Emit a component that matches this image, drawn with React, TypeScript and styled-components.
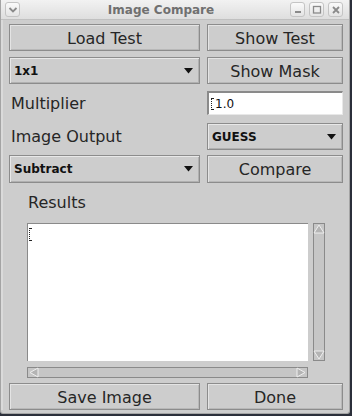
import React from 'react';
import styled, { createGlobalStyle } from 'styled-components'

const Global = createGlobalStyle`
  html, body { margin:0; padding:0; background:#2b2f3a; }
  body { font-family:"DejaVu Sans", "Liberation Sans", sans-serif; }
`

function TitleIcon({ kind }: { kind: 'menu' | 'min' | 'max' | 'close' }) {
    return (
        <svg width="10" height="10" viewBox="0 0 10 10">
            {kind === 'menu' && <path d="M1.5 3 L5 6.5 L8.5 3" stroke="#8a8a8a" strokeWidth="1.8" fill="none" />}
            {kind === 'min' && <rect x="2" y="6" width="6" height="2" fill="#8a8a8a" />}
            {kind === 'max' && <rect x="1.5" y="1.5" width="7" height="6.5" stroke="#8a8a8a" strokeWidth="1.3" fill="none" />}
            {kind === 'close' && <path d="M2 2 L8 8 M8 2 L2 8" stroke="#8a8a8a" strokeWidth="1.8" />}
        </svg>
    )
}

function Arrow() {
    return (
        <svg width="9" height="6" viewBox="0 0 9 6">
            <path d="M0 0 H9 L4.5 5.5 Z" fill="#111" />
        </svg>
    )
}

function ScrollArrow({ dir }: { dir: 'up' | 'down' | 'left' | 'right' }) {
    const d = {
        up: 'M1 9 L6 1 L11 9 Z',
        down: 'M1 1 L6 9 L11 1 Z',
        left: 'M10 1 L2 5.5 L10 10 Z',
        right: 'M2 1 L10 5.5 L2 10 Z',
    }[dir]
    const vertical = dir === 'up' || dir === 'down'
    return (
        <svg width="12" height={vertical ? 10 : 11} viewBox={vertical ? '0 0 12 10' : '0 0 12 11'}>
            <path d={d} fill="#b4b4b4" stroke="#efefef" strokeWidth="1" />
        </svg>
    )
}

function App() {
    return (
        <>
            <Global />
            <Window>
                <TitleBar>
                    <TitleButton><TitleIcon kind="menu" /></TitleButton>
                    <Title>Image Compare</Title>
                    <TitleButtons>
                        <TitleButton><TitleIcon kind="min" /></TitleButton>
                        <TitleButton><TitleIcon kind="max" /></TitleButton>
                        <TitleButton><TitleIcon kind="close" /></TitleButton>
                    </TitleButtons>
                </TitleBar>
                <Content>
                    <Row $top={4}>
                        <Button>Load Test</Button>
                        <Button>Show Test</Button>
                    </Row>
                    <Row $top={6}>
                        <Choice><span>1x1</span><Arrow /></Choice>
                        <Button>Show Mask</Button>
                    </Row>
                    <Row $top={7} $height={24}>
                        <Label>Multiplier</Label>
                        <Field><Caret />1.0</Field>
                    </Row>
                    <Row $top={8}>
                        <Label>Image Output</Label>
                        <Choice><span>GUESS</span><Arrow /></Choice>
                    </Row>
                    <Row $top={5} $height={28}>
                        <Choice><span>Subtract</span><Arrow /></Choice>
                        <Button>Compare</Button>
                    </Row>
                    <ResultsLabel>Results</ResultsLabel>
                    <ScrollPane>
                        <TextArea><Caret $tall /></TextArea>
                        <VScroll>
                            <ScrollArrow dir="up" />
                            <ScrollArrow dir="down" />
                        </VScroll>
                        <HScroll>
                            <ScrollArrow dir="left" />
                            <ScrollArrow dir="right" />
                        </HScroll>
                    </ScrollPane>
                    <Row $top={5}>
                        <Button>Save Image</Button>
                        <Button>Done</Button>
                    </Row>
                </Content>
            </Window>
        </>
    );
}

const Window = styled.div`
  width:350px;
  height:414px;
  box-sizing:border-box;
  background:#cdcdcd;
  border:1px solid #a4a4a4;
  border-top:none;
  border-radius:0 0 3px 3px;
  display:flex;
  flex-direction:column;`

const TitleBar = styled.div`
  height:20px;
  display:flex;
  align-items:center;
  padding:0 6px 0 4px;
  background:linear-gradient(#f2f2f2, #dedede);
  border-bottom:1px solid #c0c0c0;
  box-sizing:border-box;`

const Title = styled.div`
  flex:1;
  text-align:center;
  font-weight:bold;
  font-size:12px;
  color:#707070;
  padding-left:12px;`

const TitleButtons = styled.div`
  display:flex;
  gap:4px;`

const TitleButton = styled.div`
  width:15px;
  height:15px;
  box-sizing:border-box;
  border:1px solid #c4c4c4;
  border-radius:3px;
  background:linear-gradient(#fafafa, #e4e4e4);
  display:flex;
  align-items:center;
  justify-content:center;`

const Content = styled.div`
  padding:0 6px 0 6px;
  display:flex;
  flex-direction:column;
  border-left:2px solid #dadada;`

const Row = styled.div<{ $top: number, $height?: number }>`
  display:grid;
  grid-template-columns:191px 136px;
  column-gap:7px;
  margin-top:${p => p.$top}px;
  height:${p => p.$height ?? 27}px;`

const Button = styled.div`
  box-sizing:border-box;
  border:1px solid #8c8c8c;
  box-shadow:inset 1px 1px 0 #e4e4e4, inset -1px -1px 0 #b8b8b8;
  background:#cdcdcd;
  display:flex;
  align-items:center;
  justify-content:center;
  font-size:16px;
  color:#262626;
  padding-top:1px;`

const Choice = styled.div`
  box-sizing:border-box;
  border:1px solid #8c8c8c;
  box-shadow:inset 1px 1px 0 #e8e8e8, inset -1px -1px 0 #b0b0b0;
  background:#cdcdcd;
  display:flex;
  align-items:center;
  justify-content:space-between;
  padding:0 6px 0 4px;
  font-size:12px;
  font-weight:bold;
  color:#111;`

const Label = styled.div`
  display:flex;
  align-items:center;
  padding-left:2px;
  font-size:16px;
  color:#262626;`

const Field = styled.div`
  box-sizing:border-box;
  background:#fff;
  border-top:2px solid #8a8a8a;
  border-left:2px solid #8a8a8a;
  border-right:1px solid #e8e8e8;
  border-bottom:1px solid #e8e8e8;
  display:flex;
  align-items:center;
  padding-left:1px;
  font-size:12px;
  color:#111;`

const Caret = styled.span<{ $tall?: boolean }>`
  display:inline-block;
  width:3px;
  height:${p => p.$tall ? 13 : 12}px;
  box-sizing:border-box;
  border-left:1px dotted #222;
  border-top:1px solid #222;
  border-bottom:1px solid #222;
  margin-right:1px;
  margin-left:1px;`

const ResultsLabel = styled.div`
  margin-top:12px;
  padding-left:19px;
  height:16px;
  line-height:16px;
  font-size:16px;
  color:#262626;`

const ScrollPane = styled.div`
  margin-top:12px;
  margin-left:18px;
  display:grid;
  grid-template-columns:281px 12px;
  grid-template-rows:138px 11px;
  column-gap:5px;
  row-gap:6px;`

const TextArea = styled.div`
  box-sizing:border-box;
  background:#fff;
  border-top:1px solid #8a8a8a;
  border-left:1px solid #8a8a8a;
  padding:2px 0 0 0;`

const VScroll = styled.div`
  box-sizing:border-box;
  background:#c6c6c6;
  border:1px solid #8a8a8a;
  display:flex;
  flex-direction:column;
  justify-content:space-between;
  align-items:center;`

const HScroll = styled.div`
  box-sizing:border-box;
  background:#c6c6c6;
  border:1px solid #8a8a8a;
  display:flex;
  justify-content:space-between;
  align-items:center;
  width:281px;`

export default App;
